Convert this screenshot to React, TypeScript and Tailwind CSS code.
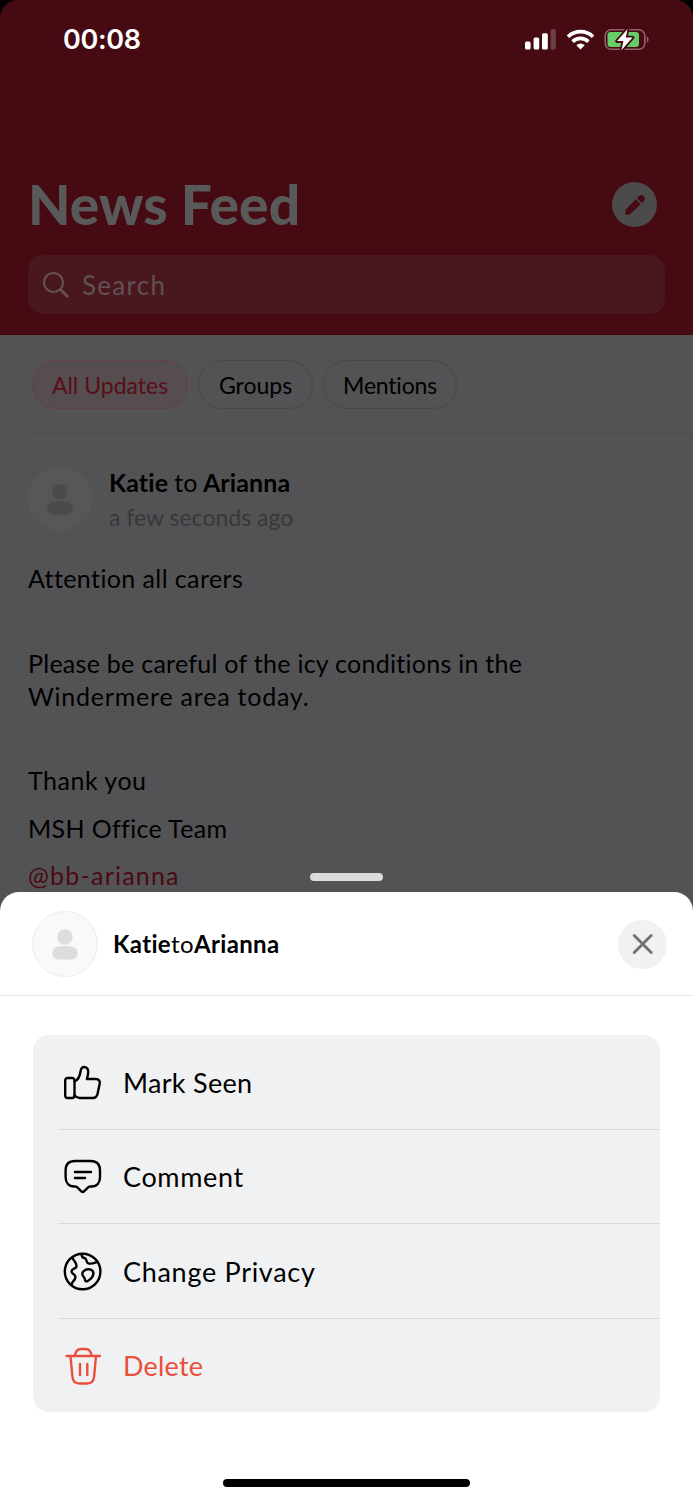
import type { ReactNode } from 'react'
import { clsx } from 'clsx'

function StatusIcons() {
  return (
    <svg width="126" height="24" viewBox="0 0 126 24" className="flex-shrink-0">
      <g fill="#fff">
        <rect x="1" y="13.5" width="5.6" height="8" rx="1.6" />
        <rect x="9.6" y="9.6" width="5.6" height="11.9" rx="1.6" />
        <rect x="18" y="5.2" width="5.8" height="16.3" rx="1.6" />
        <rect x="26.6" y="1" width="5.2" height="20.5" rx="1.6" opacity=".22" />
      </g>
      <g fill="none" stroke="#fff" strokeWidth="3.6">
        <path d="M44 8.7a18 18 0 0 1 25 0" />
        <path d="M48.6 13.6a11.3 11.3 0 0 1 15.8 0" />
      </g>
      <path d="M52.3 17.3a6.1 6.1 0 0 1 8.4 0L56.5 21.5z" fill="#fff" />
      <rect x="81.2" y="1.7" width="39.6" height="19.6" rx="6" fill="none" stroke="#8d6367" strokeWidth="1.6" />
      <path d="M122.8 8.2c2.4 1.1 2.4 5.5 0 6.6z" fill="#8d6367" />
      <rect x="83.5" y="4" width="31.5" height="15" rx="3.2" fill="#67ce67" />
      <path
        d="M103.6 1 L93 13.1 H99.4 L97.4 22.2 L108.6 9.5 H101.8 Z"
        fill="#fff"
        stroke="#450a12"
        strokeWidth="3.6"
        paintOrder="stroke"
        strokeLinejoin="round"
      />
    </svg>
  )
}

function Avatar({ className, person }: { className: string; person: string }) {
  return (
    <div className={clsx('rounded-full border flex items-center justify-center flex-shrink-0', className)}>
      <svg width="26" height="31" viewBox="0 0 26 31" fill={person} className="mr-px">
        <circle cx="13" cy="8" r="7.7" />
        <path d="M.3 23.5C.3 19 5 17 13 17s12.700 2 12.700 6.500c0 5-3 7-7 7H7.300c-4 0-7-2-7-7z" />
      </svg>
    </div>
  )
}

function Chip({ children, className }: { children: ReactNode; className: string }) {
  return (
    <button className={clsx('h-[49px] rounded-full border-[1.5px] text-[23px] leading-[46px] whitespace-nowrap', className)}>
      {children}
    </button>
  )
}

const iconProps = {
  width: 40,
  height: 40,
  viewBox: '0 0 40 40',
  fill: 'none',
  stroke: 'currentColor',
  strokeWidth: 2.4,
  strokeLinecap: 'round',
  strokeLinejoin: 'round',
} as const

const actions = [
  {
    label: 'Mark Seen',
    spacing: 'tracking-[0.3px]',
    icon: (
      <svg {...iconProps}>
        <rect x="2.200" y="15" width="9.300" height="20" rx="2.400" />
        <path d="M11.500 18.500c4-2 5.500-5.500 6-10C17.900 5.500 19.200 4 21.200 4c2.400 0 4 2 4 4.700 0 3-.6 5-1.300 7.300h9c2.700 0 4.300 2 3.800 4.700l-2.200 10.300c-.6 2.700-2 4-4.600 4H16.500c-2.300 0-3.500-1-5-2.700" />
      </svg>
    ),
  },
  {
    label: 'Comment',
    spacing: 'tracking-[0.65px]',
    icon: (
      <svg {...iconProps}>
        <path d="M12 4h15.500c6.300 0 9.500 3.500 9.500 9.500v6.500c0 6-3.200 9.500-8.200 9.500h-1.500c-1.200 0-1.900.4-2.700 1.300l-3.300 3.400c-1 1-2.200 1-3.200 0l-3.300-3.400c-.8-.9-1.500-1.300-2.700-1.300h-1c-5.200 0-8.500-3.500-8.500-9.500v-6.500C2.600 7.500 5.800 4 12 4z" />
        <path d="M12 15h16M12 21h10" />
      </svg>
    ),
  },
  {
    label: 'Change Privacy',
    spacing: 'tracking-[0.7px]',
    icon: (
      <svg {...iconProps}>
        <circle cx="19.600" cy="19.500" r="17.800" />
        <path d="M9.500 6c1.500 3.500 4.500 4.500 4 8.500-.3 2.500-5 2-5 5 0 2.500 4 2.500 4 5.500 0 2-1 3-2.200 4.200-.8.800-1 2-1.800 3" />
        <path d="M18.500 2.500c.3 2.500 1 3.300 3 3.500 2.500.3 1.300 4 3.500 5.200 2.500 1.300 5 .2 9.500-1.500" />
        <path d="M21.500 18.500c3-2 8-1.500 8.800 2 .6 3.500-2.500 6.500-5.600 8.500-1.800 1-2.800-.2-2.900-2-.1-1.800-2.300-2.300-2.500-5-.1-1.500.8-2.700 2.200-3.500z" />
      </svg>
    ),
  },
  {
    label: 'Delete',
    spacing: 'tracking-[0.2px]',
    icon: (
      <svg {...iconProps}>
        <path d="M3.500 10h33.500M7.500 10l1.900 20.500c.4 5 3 7 7.100 7h7.500c4.100 0 6.700-2 7.100-7L33 10M12 9.500c.6-4.500 2.500-6.500 6-6.500h4.500c3.500 0 5.400 2 6 6.500M17 18v11M24.300 18v11" />
      </svg>
    ),
  },
]

export default function App() {
  return (
    <div className="w-[693px] h-[1500px] overflow-hidden bg-[#535355] font-['Lato','Open_Sans',sans-serif] text-black">
      <div className="h-[892px] overflow-hidden">
        <div className="bg-black">
          <header className="h-[335px] bg-[#450a12] rounded-t-[18px]">
            <div className="h-[78px] pl-[63px] pr-[43px] pt-[2px] flex items-center justify-between">
              <span className="mt-px font-['Inter',sans-serif] text-[27px] font-semibold text-white tracking-[-0.3px]">
                00:08
              </span>
              <StatusIcons />
            </div>
            <div className="h-[177px] pl-[28px] pr-[36px] pt-[93px] flex justify-between">
              <h1 className="text-[55px] leading-[66px] font-black text-[#595959] tracking-[0.1px] whitespace-nowrap">News Feed</h1>
              <button className="mt-[11px] w-[45px] h-[45px] rounded-full bg-[#4b4b4b] flex items-center justify-center">
                <svg width="20" height="20" viewBox="0 0 20 20" fill="#450a12">
                  <path d="M10.700 4.300 15.700 9.300 6 18.600c-.5.500-1 .7-1.700.8L1 19.700c-.5 0-.8-.3-.8-.8l.4-3.500c.1-.6.300-1.100.7-1.500z" />
                  <path d="M11.900 3.100 14.200.9c1.300-1.200 3-1.100 4.200.1l.7.700c1.200 1.200 1.200 2.900 0 4.200L16.900 8.100z" />
                </svg>
              </button>
            </div>
            <div className="mx-[28px] h-[59px] rounded-[15px] bg-[#49171e] flex items-center pl-[15px] gap-[11px]">
              <svg width="28" height="28" viewBox="0 0 28 28" fill="none" stroke="#685054" strokeWidth="2.1">
                <circle cx="10.500" cy="11.500" r="9.500" />
                <path d="m17.200 18.200 7.800 7.800" strokeWidth="2.700" />
              </svg>
              <span className="text-[26px] leading-[32px] text-[#615054] tracking-[1.3px]">Search</span>
            </div>
          </header>
        </div>

        <div className="pl-[32px]">
          <div className="pt-[25px] h-[99px] border-b border-[#4b4b4e] flex gap-[10px]">
            <Chip className="w-[156px] bg-[#554d4f] border-[#663e45] text-[#5a0d18]">All Updates</Chip>
            <Chip className="w-[115px] border-[#48484a]">Groups</Chip>
            <Chip className="w-[134px] border-[#48484a] tracking-[-0.2px]">Mentions</Chip>
          </div>
        </div>

        <article className="pl-[28px] pt-[33px]">
          <div className="flex h-[64px] gap-[17px]">
            <Avatar className="w-[64px] h-[64px] bg-[#575757] border-[#595959]" person="#4a4b4d" />
            <div className="-mt-px">
              <p className="text-[25px] leading-[32px] font-bold tracking-[0.1px] whitespace-nowrap">
                Katie <span className="font-normal">to</span> Arianna
              </p>
              <p className="mt-[4px] text-[23px] leading-[30px] text-[#37383a]">a few seconds ago</p>
            </div>
          </div>
          <div className="mt-[31px] text-[25px] leading-[33px] whitespace-nowrap">
            <p className="tracking-[0.4px]">Attention all carers</p>
            <p className="mt-[52px]">
              <span className="tracking-[0.27px]">Please be careful of the icy conditions in the</span>
              <br />
              <span className="tracking-[0.78px]">Windermere area today.</span>
            </p>
            <p className="mt-[51px] tracking-[0.5px]">Thank you</p>
            <p className="mt-[15px] tracking-[0.35px]">MSH Office Team</p>
            <p className="mt-[14px] text-[#4b0a13] tracking-[1.2px]">@bb-arianna</p>
          </div>
        </article>
      </div>

      <section className="relative h-[608px] rounded-t-[19px] bg-white flex flex-col">
        <div className="absolute -top-[19px] left-[310px] w-[73px] h-[8px] rounded-full bg-[#dcdcdc]" />
        <div className="h-[104px] border-b border-[#e4e4e4] pl-[32px] pr-[26px] pt-px flex items-center">
          <Avatar className="w-[66px] h-[66px] bg-[#f9f9f9] border-[#ececec]" person="#dcdddf" />
          <p className="ml-[15px] flex-1 text-[24px] leading-[30px] font-bold tracking-[0.35px]">
            Katie<span className="font-normal">to</span>Arianna
          </p>
          <button className="w-[49px] h-[49px] rounded-full bg-[#f1f1f1] flex items-center justify-center">
            <svg width="22" height="22" viewBox="0 0 22 22" stroke="#737373" strokeWidth="2.900" strokeLinecap="round">
              <path d="M2.200 2.500l17 17M19.200 2.500l-17 17" />
            </svg>
          </button>
        </div>

        <div className="mt-[39px] mx-[33px] h-[377px] rounded-[16px] bg-[#f0f1f3] pl-[25px] flex flex-col">
          {actions.map(({ label, icon, spacing }, i) => (
            <button
              key={label}
              className={clsx(
                'flex-1 flex items-center gap-[20px] pl-[5px] pt-[2px] text-[27px] leading-[34px]',
                i > 0 && 'border-t border-[#d9dadc]',
                label === 'Delete' && 'text-[#e94f3d]',
              )}
            >
              {icon}
              <span className={spacing}>{label}</span>
            </button>
          ))}
        </div>

        <div className="mt-auto mb-[13px] mx-auto w-[247px] h-[8px] rounded-full bg-black" />
      </section>
    </div>
  )
}
